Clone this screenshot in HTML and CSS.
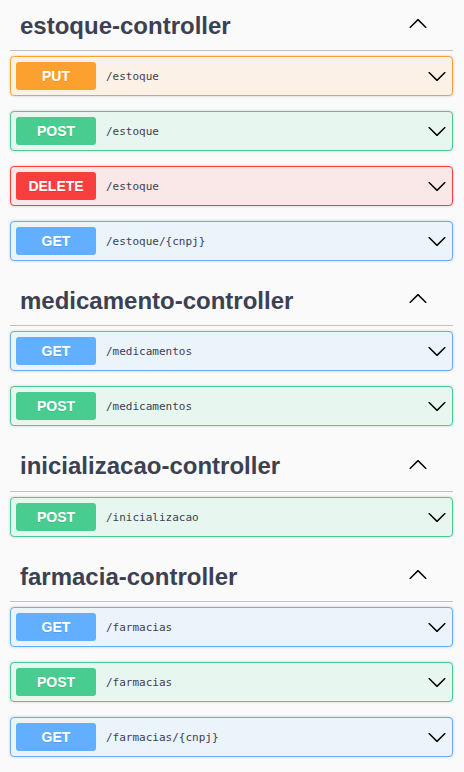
FILE: index.html
```html
<!DOCTYPE html>
<html lang="pt">
<head>
<meta charset="utf-8">
<title>Swagger</title>
<link rel="stylesheet" href="styles.css">
</head>
<body>
<svg width="0" height="0" class="defs" aria-hidden="true">
  <defs>
    <path id="arrow" d="M17.418 6.109c.272-.268.709-.268.979 0s.271.701 0 .969l-7.908 7.83c-.27.268-.707.268-.979 0l-7.908-7.830c-.27-.268-.27-.701 0-.969.271-.268.709-.268.979 0L10 13.25l7.418-7.141z"/>
  </defs>
</svg>
<main class="wrapper">

  <section class="tag-section">
    <h3 class="tag"><span>estoque-controller</span>
      <svg class="arrow up" viewBox="0 0 20 20" width="20" height="20"><use href="#arrow"/></svg></h3>
    <div class="op put"><span class="method">PUT</span><span class="path">/estoque</span>
      <svg class="arrow" viewBox="0 0 20 20" width="20" height="20"><use href="#arrow"/></svg></div>
    <div class="op post"><span class="method">POST</span><span class="path">/estoque</span>
      <svg class="arrow" viewBox="0 0 20 20" width="20" height="20"><use href="#arrow"/></svg></div>
    <div class="op delete"><span class="method">DELETE</span><span class="path">/estoque</span>
      <svg class="arrow" viewBox="0 0 20 20" width="20" height="20"><use href="#arrow"/></svg></div>
    <div class="op get"><span class="method">GET</span><span class="path">/estoque/{cnpj}</span>
      <svg class="arrow" viewBox="0 0 20 20" width="20" height="20"><use href="#arrow"/></svg></div>
  </section>

  <section class="tag-section">
    <h3 class="tag"><span>medicamento-controller</span>
      <svg class="arrow up" viewBox="0 0 20 20" width="20" height="20"><use href="#arrow"/></svg></h3>
    <div class="op get"><span class="method">GET</span><span class="path">/medicamentos</span>
      <svg class="arrow" viewBox="0 0 20 20" width="20" height="20"><use href="#arrow"/></svg></div>
    <div class="op post"><span class="method">POST</span><span class="path">/medicamentos</span>
      <svg class="arrow" viewBox="0 0 20 20" width="20" height="20"><use href="#arrow"/></svg></div>
  </section>

  <section class="tag-section">
    <h3 class="tag tall"><span>inicializacao-controller</span>
      <svg class="arrow up" viewBox="0 0 20 20" width="20" height="20"><use href="#arrow"/></svg></h3>
    <div class="op post"><span class="method">POST</span><span class="path">/inicializacao</span>
      <svg class="arrow" viewBox="0 0 20 20" width="20" height="20"><use href="#arrow"/></svg></div>
  </section>

  <section class="tag-section">
    <h3 class="tag"><span>farmacia-controller</span>
      <svg class="arrow up" viewBox="0 0 20 20" width="20" height="20"><use href="#arrow"/></svg></h3>
    <div class="op get"><span class="method">GET</span><span class="path">/farmacias</span>
      <svg class="arrow" viewBox="0 0 20 20" width="20" height="20"><use href="#arrow"/></svg></div>
    <div class="op post"><span class="method">POST</span><span class="path">/farmacias</span>
      <svg class="arrow" viewBox="0 0 20 20" width="20" height="20"><use href="#arrow"/></svg></div>
    <div class="op get"><span class="method">GET</span><span class="path">/farmacias/{cnpj}</span>
      <svg class="arrow" viewBox="0 0 20 20" width="20" height="20"><use href="#arrow"/></svg></div>
  </section>

</main>
</body>
</html>
```

FILE: styles.css
```css
html, body {
  margin: 0;
  padding: 0;
  background: #fafafa;
}

body {
  font-family: "Liberation Sans", Arial, sans-serif;
  color: #3b4151;
  overflow: hidden;
}

.defs {
  position: absolute;
  width: 0;
  height: 0;
}

.wrapper {
  width: 443px;
  margin: 0 0 0 10px;
  padding-top: 1px;
}

.tag {
  display: flex;
  align-items: center;
  justify-content: space-between;
  box-sizing: border-box;
  height: 50px;
  margin: 0 0 5px;
  padding: 0 25px 0 10px;
  border-bottom: 1px solid rgba(59, 65, 81, 0.3);
  font-size: 24px;
  font-weight: 700;
  color: #3b4151;
}

.tag.tall {
  height: 51px;
}

.arrow {
  flex: none;
  fill: #000;
  display: block;
}

.arrow.up {
  transform: rotate(180deg);
  margin-top: -3px;
}

.op {
  display: flex;
  align-items: center;
  box-sizing: border-box;
  height: 40px;
  margin: 0 0 15px;
  padding: 5px;
  border: 1px solid;
  border-radius: 4px;
  box-shadow: 0 0 3px rgba(0, 0, 0, 0.19);
}

.method {
  flex: none;
  width: 80px;
  height: 28px;
  line-height: 28px;
  border-radius: 3px;
  text-align: center;
  color: #fff;
  font-size: 14px;
  font-weight: 700;
  text-shadow: 0 1px 0 rgba(0, 0, 0, 0.1);
}

.path {
  flex: 1;
  padding: 0 10px;
  font-family: "DejaVu Sans Mono", monospace;
  font-size: 11px;
  font-weight: 400;
  color: #3b4151;
}

.put { background: #fbf1e6; border-color: #fca130; }
.put .method { background: #fca130; }

.post { background: #e8f6f0; border-color: #49cc90; }
.post .method { background: #49cc90; }

.delete { background: #fae7e7; border-color: #f93e3e; }
.delete .method { background: #f93e3e; }

.get { background: #ebf3fb; border-color: #61affe; }
.get .method { background: #61affe; }
```
